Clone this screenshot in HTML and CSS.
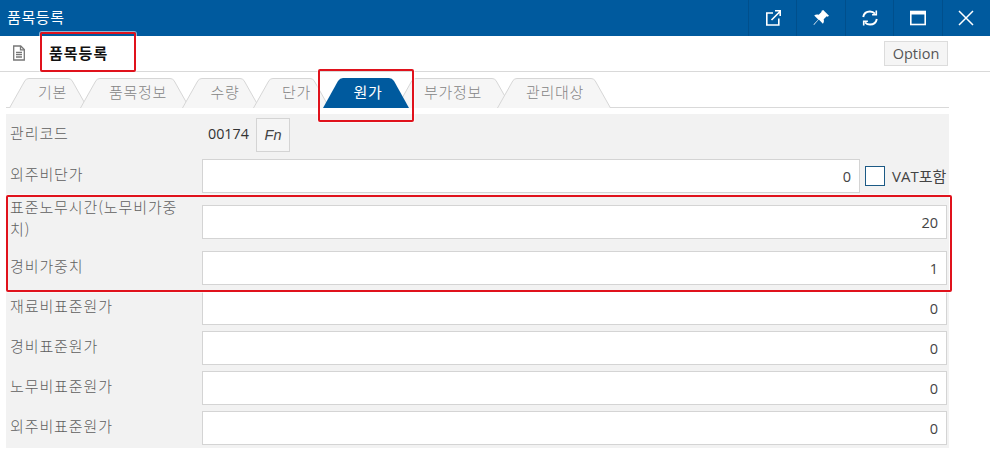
FILE: index.html
```html
<!DOCTYPE html>
<html lang="ko">
<head>
<meta charset="utf-8">
<title>품목등록</title>
<link rel="stylesheet" href="styles.css">
</head>
<body>
<header class="titlebar">
  <div class="titlebar-name">품목등록</div>
  <div class="tb-btn"><svg width="18" height="18" viewBox="0 0 18 18" fill="none" stroke="#fff" stroke-width="1.6"><path d="M9 4H2.8v12h12V9.5"/><path d="M7.5 11 16 2.5M11 1.8h5.2V7"/></svg></div>
  <div class="tb-btn"><svg width="18" height="18" viewBox="0 0 18 18" fill="#fff"><path d="M11.2 1 17 6.8l-1.3 1-1-.5-3 3c.5 1.700.2 3.200-.8 4.400L6.800 10.600 2 16l-.5-.5 4.700-5-4-4C3.400 5.500 5 5.300 6.700 5.800l3-3-.4-.9z"/></svg></div>
  <div class="tb-btn"><svg width="18" height="18" viewBox="0 0 18 18" fill="none" stroke="#fff" stroke-width="1.9"><path d="M2.200 8C2.800 4.700 5.600 2.500 9 2.500c2 0 3.700.8 5 2.200"/><path d="M15.800 10c-.6 3.300-3.400 5.500-6.800 5.500-2 0-3.700-.8-5-2.200"/><path d="M15.300 1.500v4.200h-4.200M2.700 16.500v-4.200h4.200" stroke-width="1.600"/></svg></div>
  <div class="tb-btn"><svg width="18" height="18" viewBox="0 0 18 18" fill="none" stroke="#fff"><rect x="1.800" y="2.500" width="14.400" height="13" stroke-width="1.600"/><path d="M1.800 4h14.400" stroke-width="3"/></svg></div>
  <div class="tb-btn"><svg width="18" height="18" viewBox="0 0 18 18" fill="none" stroke="#fff" stroke-width="1.500"><path d="M2 2l14 14M16 2 2 16"/></svg></div>
</header>

<div class="subbar">
  <svg class="doc-icon" width="14" height="16" viewBox="0 0 14 16" fill="none" stroke="#777" stroke-width="1.300"><path d="M1.700 1h7l3.600 3.600V15H1.700z"/><path d="M8.500 1v3.800h3.800M4 7.500h6M4 9.700h6M4 12h6"/></svg>
  <h1 class="subbar-title">품목등록</h1>
  <button class="option-btn">Option</button>
</div>

<nav class="tabs">
  <div class="tab tab-1"><svg class="tab-shape" width="79" height="30" viewBox="0 0 79 30"><path d="M.5 30 16 2.500Q17.500.5 20 .5H59Q61.500.5 63 2.500L78.500 30"/></svg><span class="tab-text">기본</span></div>
  <div class="tab tab-2"><svg class="tab-shape" width="110" height="30" viewBox="0 0 110 30"><path d="M.5 30 16 2.500Q17.500.5 20 .5H90Q92.500.5 94 2.500L109.500 30"/></svg><span class="tab-text">품목정보</span></div>
  <div class="tab tab-3"><svg class="tab-shape" width="78" height="30" viewBox="0 0 78 30"><path d="M.5 30 16 2.500Q17.500.5 20 .5H58Q60.500.5 62 2.500L77.500 30"/></svg><span class="tab-text">수량</span></div>
  <div class="tab tab-4"><svg class="tab-shape" width="77" height="30" viewBox="0 0 77 30"><path d="M.5 30 16 2.500Q17.500.5 20 .5H57Q59.500.5 61 2.500L76.500 30"/></svg><span class="tab-text">단가</span></div>
  <div class="tab tab-5 tab-active"><svg class="tab-shape" width="86" height="30" viewBox="0 0 86 30"><path d="M0 30 15 3Q17 0 20 0H66Q69 0 71 3L86 30Z"/></svg><span class="tab-text">원가</span></div>
  <div class="tab tab-6"><svg class="tab-shape" width="116" height="30" viewBox="0 0 116 30"><path d="M.5 30 16 2.500Q17.500.5 20 .5H96Q98.500.5 100 2.500L115.500 30"/></svg><span class="tab-text">부가정보</span></div>
  <div class="tab tab-7"><svg class="tab-shape" width="114" height="30" viewBox="0 0 114 30"><path d="M.5 30 16 2.500Q17.500.5 20 .5H94Q96.500.5 98 2.500L113.500 30"/></svg><span class="tab-text">관리대상</span></div>
</nav>

<main class="form">
  <div class="row row-code">
    <label class="label">관리코드</label>
    <span class="code">00174</span>
    <button class="fn-btn">Fn</button>
  </div>
  <div class="row row-tall">
    <label class="label">외주비단가</label>
    <div class="input">0</div>
    <span class="check"></span>
    <span class="check-label">VAT포함</span>
  </div>
  <div class="row row-tall">
    <label class="label label-wrap">표준노무시간(노무비가중치)</label>
    <div class="input">20</div>
  </div>
  <div class="row">
    <label class="label">경비가중치</label>
    <div class="input">1</div>
  </div>
  <div class="row">
    <label class="label">재료비표준원가</label>
    <div class="input">0</div>
  </div>
  <div class="row">
    <label class="label">경비표준원가</label>
    <div class="input">0</div>
  </div>
  <div class="row">
    <label class="label">노무비표준원가</label>
    <div class="input">0</div>
  </div>
  <div class="row">
    <label class="label">외주비표준원가</label>
    <div class="input">0</div>
  </div>
</main>

<div class="mark mark-title"></div>
<div class="mark mark-tab"></div>
<div class="mark mark-rows"></div>
</body>
</html>
```
FILE: styles.css
```css
* { box-sizing: border-box; }
html, body { margin: 0; padding: 0; height: 469px; overflow: hidden; background: #fff; }
body { font-family: "Open Sans", "Noto Sans CJK KR", sans-serif; font-size: 14px; color: #333; position: relative; }

.titlebar { height: 36px; background: #005a9e; display: flex; align-items: stretch; color: #fff; }
.titlebar-name { flex: 1; padding-left: 7px; line-height: 33px; font-family: "Noto Sans CJK KR", sans-serif; font-size: 15px; letter-spacing: .6px; }
.tb-btn { width: 48.4px; border-left: 1px solid #004f8c; display: flex; align-items: center; justify-content: center; }

.subbar { height: 36px; border-bottom: 1px solid #d9d9d9; display: flex; align-items: center; padding-left: 12px; }
.doc-icon { margin-top: -1px; }
.subbar-title { margin: -3px 0 0 23px; flex: 1; font-family: "Noto Sans CJK KR", sans-serif; font-size: 15px; font-weight: 700; letter-spacing: 1px; color: #111; }
.option-btn { width: 64px; height: 25px; margin: -1px 42px 0 0; padding: 0; background: #f5f5f5; border: 1px solid #dcdcdc; font: 14.500px "Open Sans", sans-serif; color: #555; }

.tabs { display: flex; height: 36px; margin: 0 41px 0 6px; padding: 6px 0 0 3px; border-bottom: 1px solid #d9d9d9; }
.tab { position: relative; height: 30px; display: flex; align-items: center; justify-content: center; font-family: "Noto Sans CJK KR", sans-serif; font-size: 15px; font-weight: 300; letter-spacing: .7px; color: #858585; }
.tab-shape { position: absolute; left: 0; top: 0; }
.tab-shape path { fill: #f6f6f6; stroke: #d6d6d6; }
.tab-text { position: relative; margin-top: -3px; }
.tab-1 { width: 79px; }
.tab-1 .tab-text { margin-left: 8px; }
.tab-2 { width: 110px; margin-left: -8px; }
.tab-2 .tab-text { margin-left: 6px; }
.tab-3 { width: 78px; margin-left: -8px; }
.tab-3 .tab-text { margin-left: 8px; }
.tab-4 { width: 77px; margin-left: -7px; }
.tab-4 .tab-text { margin-left: 10px; }
.tab-5 { width: 86px; margin-left: -7px; }
.tab-5 .tab-text { margin-left: 4px; }
.tab-6 { width: 116px; margin-left: -13px; }
.tab-6 .tab-text { margin-left: -2px; }
.tab-7 { width: 114px; margin-left: -15px; }
.tab-7 .tab-text { margin-left: 2px; }
.tab-active { z-index: 1; color: #fff; font-weight: 400; }
.tab-active .tab-shape path { fill: #005a9e; stroke: none; }

.form { margin: 6px 41px 0 6px; padding: 4px 2px 3px 0; background: #f2f2f2; display: flex; flex-direction: column; gap: 6px; }
.row { display: flex; align-items: center; height: 34px; }
.row-code { margin-bottom: 1px; }
.row-tall { margin-bottom: 6px; }
.label { width: 196px; padding: 0 16px 0 4px; margin-bottom: 4px; font-family: "Noto Sans CJK KR", sans-serif; font-size: 15px; font-weight: 300; letter-spacing: .9px; line-height: 22px; color: #5f5f5f; flex: none; }
.label-wrap { margin-bottom: 8px; }
.input { flex: 1; height: 34px; background: #fff; border: 1px solid #d4d4d4; text-align: right; padding: 0 8px 0 0; line-height: 34px; font-size: 14.500px; color: #444; }
.code { width: 54px; margin-bottom: 4px; padding-left: 6px; color: #333; font-size: 14.300px; }
.fn-btn { width: 34px; height: 34px; padding: 0; background: #f5f5f5; border: 1px solid #d4d4d4; font: italic 14.500px "Liberation Sans", sans-serif; color: #444; }
.check { width: 20px; height: 20px; margin: 0 7px 0 5px; background: #fff; border: 1.500px solid #1c5a85; flex: none; }
.check-label { width: 55px; font-family: "Open Sans", "Noto Sans CJK KR", sans-serif; font-size: 15px; color: #444; white-space: nowrap; margin-bottom: 2px; }

.mark { position: absolute; border: 2px solid #e0121c; border-radius: 2px; box-shadow: 0 0 0 1px rgba(255,255,255,.55); pointer-events: none; }
.mark-title { left: 40px; top: 32px; width: 96px; height: 40px; }
.mark-tab { left: 318px; top: 69px; width: 96px; height: 53px; }
.mark-rows { left: 6px; top: 195px; width: 946px; height: 97px; }
```
